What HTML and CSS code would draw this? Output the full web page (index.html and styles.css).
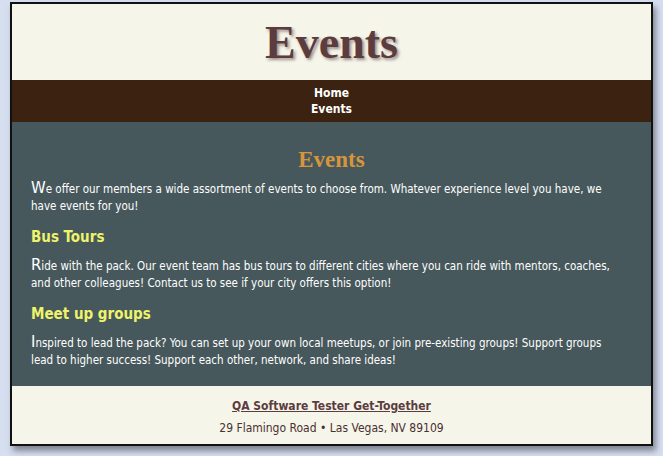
FILE: index.html
```html
<!DOCTYPE html>
<html lang="en">
<head>
<meta charset="utf-8">
<title>Events</title>
<link rel="stylesheet" href="styles.css">
</head>
<body>
<div class="wrapper">
  <header class="site-header">
    <h1 class="site-title">Events</h1>
  </header>
  <nav class="site-nav">
    <a href="#">Home</a>
    <a href="#">Events</a>
  </nav>
  <main class="content">
    <h2 class="page-title">Events</h2>
    <p>We offer our members a wide assortment of events to choose from. Whatever experience level you have, we have events for you!</p>
    <h3>Bus Tours</h3>
    <p>Ride with the pack. Our event team has bus tours to different cities where you can ride with mentors, coaches, and other colleagues! Contact us to see if your city offers this option!</p>
    <h3>Meet up groups</h3>
    <p>Inspired to lead the pack? You can set up your own local meetups, or join pre-existing groups! Support groups lead to higher success! Support each other, network, and share ideas!</p>
  </main>
  <footer class="site-footer">
    <a class="footer-name" href="#">QA Software Tester Get-Together</a>
    <p class="footer-address">29 Flamingo Road &bull; Las Vegas, NV 89109</p>
  </footer>
</div>
</body>
</html>
```

FILE: styles.css
```css
html, body {
  margin: 0;
  padding: 0;
}
body {
  background: #d6dff0;
  font-family: "DejaVu Sans Condensed", "DejaVu Sans", sans-serif;
  padding: 2px 10px 0 10px;
  height: 456px;
  box-sizing: border-box;
  overflow: hidden;
}
.wrapper {
  border: 2px solid #111;
  background: #f6f5ea;
  box-shadow: 3px 5px 6px rgba(60, 60, 70, 0.55);
  width: 639px;
}
.site-header {
  height: 76px;
  display: flex;
  align-items: center;
  justify-content: center;
}
.site-title {
  margin: 0;
  font-family: "Liberation Serif", serif;
  font-weight: bold;
  font-size: 46px;
  color: #5b3d40;
  text-shadow: 2px 2px 3px rgba(80, 60, 60, 0.55);
  line-height: 1;
  padding-top: 2px;
}
.site-nav {
  background: #3c2210;
  height: 42px;
  display: flex;
  flex-direction: column;
  align-items: center;
  justify-content: center;
}
.site-nav a {
  color: #ffffff;
  font-weight: bold;
  font-size: 12px;
  line-height: 16px;
  text-decoration: none;
}
.content {
  background: #47585c;
  color: #ffffff;
  padding: 25px 34px 14px 19px;
  height: 264px;
  box-sizing: border-box;
}
.page-title {
  margin: 0 0 7px 0;
  text-align: center;
  font-family: "Liberation Serif", serif;
  font-weight: bold;
  font-size: 23px;
  line-height: 26px;
  color: #d6953d;
  padding-left: 15px;
}
.content p {
  margin: 0;
  font-size: 11.5px;
  line-height: 16.5px;
}
.content p::first-letter {
  font-size: 16.5px;
}
.content h3 {
  margin: 13.5px 0 11.5px 0;
  font-size: 15px;
  line-height: 18px;
  color: #eef36a;
}
.site-footer {
  height: 58px;
  display: flex;
  flex-direction: column;
  align-items: center;
  padding-top: 12px;
  box-sizing: border-box;
}
.footer-name {
  color: #5b3d40;
  font-weight: bold;
  font-size: 12px;
  line-height: 16px;
}
.footer-address {
  margin: 6px 0 0 0;
  color: #4a3030;
  font-size: 12px;
  line-height: 16px;
}
```
